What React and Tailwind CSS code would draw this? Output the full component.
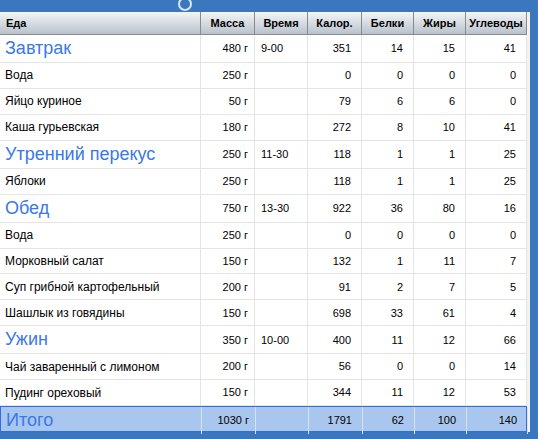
import React from 'react';

const rows = [
  ['Завтрак', '480 г', '9-00', 351, 14, 15, 41, true],
  ['Вода', '250 г', '', 0, 0, 0, 0],
  ['Яйцо куриное', '50 г', '', 79, 6, 6, 0],
  ['Каша гурьевская', '180 г', '', 272, 8, 10, 41],
  ['Утренний перекус', '250 г', '11-30', 118, 1, 1, 25, true],
  ['Яблоки', '250 г', '', 118, 1, 1, 25],
  ['Обед', '750 г', '13-30', 922, 36, 80, 16, true],
  ['Вода', '250 г', '', 0, 0, 0, 0],
  ['Морковный салат', '150 г', '', 132, 1, 11, 7],
  ['Суп грибной картофельный', '200 г', '', 91, 2, 7, 5],
  ['Шашлык из говядины', '150 г', '', 698, 33, 61, 4],
  ['Ужин', '350 г', '10-00', 400, 11, 12, 66, true],
  ['Чай заваренный с лимоном', '200 г', '', 56, 0, 0, 14],
  ['Пудинг ореховый', '150 г', '', 344, 11, 12, 53],
];

const cols = 'grid grid-cols-[201px_54px_53px_54px_52px_52px_61px]';
const heads = ['Еда', 'Масса', 'Время', 'Калор.', 'Белки', 'Жиры', 'Углеводы'];

export default function App() {
  return (
    <div className="w-[538px] h-[439px] bg-[#3b77be] flex flex-col overflow-hidden" style={{ fontFamily: '"Liberation Sans", Arial, sans-serif' }}>
      <div className="h-[12px] flex shrink-0 relative">
        <div className="absolute left-[172px] -top-[4px] w-[26px] h-[16px] flex items-center justify-center">
          <div className="w-[14px] h-[14px] rounded-full border-2 border-white/80" />
        </div>
      </div>
      <div className="flex-1 flex mr-[8px] mb-[7px] bg-[#f2f2f2]">
        <div className="bg-white flex flex-col w-[527px]">
          <div className={`${cols} h-[23px] shrink-0 bg-gradient-to-b from-[#f4f6f8] to-[#b9c2cc] border-b border-[#8a8a8a] text-[11px] font-bold text-black`}>
            {heads.map((h, i) => (
              <div key={h} className={`flex items-center border-r border-[#8a8a8a] ${i === 0 ? 'pl-[6px]' : 'justify-center'}`}>{h}</div>
            ))}
          </div>
          {rows.map((r, k) => (
            <div key={k} className={`${cols} flex-1 border-b border-[#e4e4e4] text-[12px] text-black`}>
              <div className={`flex items-center pl-[5px] border-r border-[#e4e4e4] ${r[7] ? 'text-[18px] text-[#3a78e8]' : ''}`}>{r[0]}</div>
              <div className="flex items-center justify-end pr-[6px] border-r border-[#e4e4e4] text-[11px]">{r[1]}</div>
              <div className="flex items-center pl-[6px] border-r border-[#e4e4e4] text-[11px]">{r[2]}</div>
              {r.slice(3, 7).map((v, j) => (
                <div key={j} className="flex items-center justify-end pr-[10px] border-r border-[#e4e4e4] text-[11px]">{v}</div>
              ))}
            </div>
          ))}
          <div className={`${cols} h-[26px] shrink-0 bg-[#a9c6ee] border border-[#2f6fe0] text-[11px] text-black`}>
            <div className="flex items-center pl-[5px] border-r border-[#d8e2f0] text-[18px] text-[#3a78e8]">Итого</div>
            <div className="flex items-center justify-end pr-[6px] border-r border-[#d8e2f0]">1030 г</div>
            <div className="border-r border-[#d8e2f0]" />
            {[1791, 62, 100, 140].map((v, j) => (
              <div key={j} className="flex items-center justify-end pr-[10px] border-r border-[#d8e2f0]">{v}</div>
            ))}
          </div>
        </div>
      </div>
    </div>
  );
}
